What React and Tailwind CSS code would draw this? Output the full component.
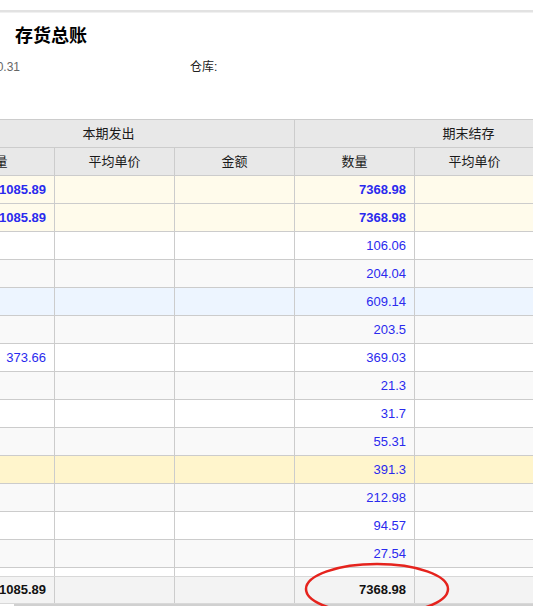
import React from 'react';

const font = { fontFamily: '"Liberation Sans", Arial, "Noto Sans CJK SC", sans-serif' };

// one row of the visible part of the ledger grid
const rows = [
  { bg: 'bg-[#fffbeb]', out: '1085.89', qty: '7368.98', bold: true },
  { bg: 'bg-[#fffbeb]', out: '1085.89', qty: '7368.98', bold: true },
  { bg: 'bg-white', qty: '106.06' },
  { bg: 'bg-[#f9f9f9]', qty: '204.04' },
  { bg: 'bg-[#edf5ff]', qty: '609.14' },
  { bg: 'bg-[#f9f9f9]', qty: '203.5' },
  { bg: 'bg-white', out: '373.66', qty: '369.03' },
  { bg: 'bg-[#f9f9f9]', qty: '21.3' },
  { bg: 'bg-white', qty: '31.7' },
  { bg: 'bg-[#f9f9f9]', qty: '55.31' },
  { bg: 'bg-[#fff5cc]', qty: '391.3' },
  { bg: 'bg-[#f9f9f9]', qty: '212.98' },
  { bg: 'bg-white', qty: '94.57' },
  { bg: 'bg-[#f9f9f9]', qty: '27.54' },
];

const Cell = ({ children, className = '' }) => (
  <div className={`w-[120px] shrink-0 h-full border-r border-[#cccccc] flex items-center ${className}`}>
    {children}
  </div>
);

const App = () => {
  return (
    <div className="relative w-[533px] h-[606px] overflow-hidden bg-white text-[#333]" style={font}>
      <div className="h-[10px]" />
      <div className="h-[2px] bg-[#e2e2e2]" />
      <div className="h-[1px] bg-[#f0f0f0]" />

      <h1 className="mt-[11px] pl-[15px] text-[18px] leading-[24px] font-bold text-black">存货总账</h1>

      <div className="mt-[11px] flex text-[12px] leading-[16px]">
        <div className="w-[200px] -ml-[180px] shrink-0 text-right text-[#666]">2024.01.01 - 2024.10.31</div>
        <div className="ml-[170px] text-[#222]">仓库:</div>
      </div>

      {/* ledger grid, scrolled so only part shows */}
      <div className="mt-[44px] border-t border-[#cccccc] overflow-hidden">
        <div className="-ml-[65px] w-[900px] text-[13px]">
          <div className="flex h-[28px] border-b border-[#cccccc] bg-[#e8e8e8] text-[#1a1a1a]">
            <div className="w-[360px] shrink-0 h-full border-r border-[#cccccc] flex items-center justify-center pr-[12px]">本期发出</div>
            <div className="w-[360px] shrink-0 h-full border-r border-[#cccccc] flex items-center justify-center pr-[12px]">期末结存</div>
          </div>
          <div className="flex h-[28px] border-b border-[#cccccc] bg-[#e8e8e8] text-[#1a1a1a]">
            <Cell className="justify-center">数量</Cell>
            <Cell className="justify-center">平均单价</Cell>
            <Cell className="justify-center">金额</Cell>
            <Cell className="justify-center">数量</Cell>
            <Cell className="justify-center">平均单价</Cell>
            <Cell className="justify-center">金额</Cell>
          </div>
          {rows.map((r, i) => (
            <div key={i} className={`flex h-[28px] border-b border-[#cccccc] ${r.bg} text-[#2a2aee] ${r.bold ? 'font-bold' : ''}`}>
              <Cell className="justify-end pr-[8px]">{r.out}</Cell>
              <Cell />
              <Cell />
              <Cell className="justify-end pr-[8px]">{r.qty}</Cell>
              <Cell />
              <Cell />
            </div>
          ))}
          <div className="flex h-[8px] bg-white">
            <Cell />
            <Cell />
            <Cell />
            <Cell />
            <Cell />
          </div>
          <div className="flex h-[28px] border-t border-b border-[#d8d8d8] bg-[#f3f3f3] font-bold text-[#111]">
            <Cell className="justify-end pr-[8px]">1085.89</Cell>
            <Cell />
            <Cell />
            <Cell className="justify-end pr-[8px]">7368.98</Cell>
            <Cell />
            <Cell />
          </div>
        </div>
      </div>
      <div className="ml-[14px] h-[2px] bg-[#d0d0d0]" />

      {/* hand-drawn highlight */}
      <svg className="absolute inset-0 pointer-events-none" width="533" height="606">
        <ellipse cx="377" cy="589" rx="71" ry="25" fill="none" stroke="#e5231d" strokeWidth="2.5" />
      </svg>
    </div>
  );
};

export default App;
